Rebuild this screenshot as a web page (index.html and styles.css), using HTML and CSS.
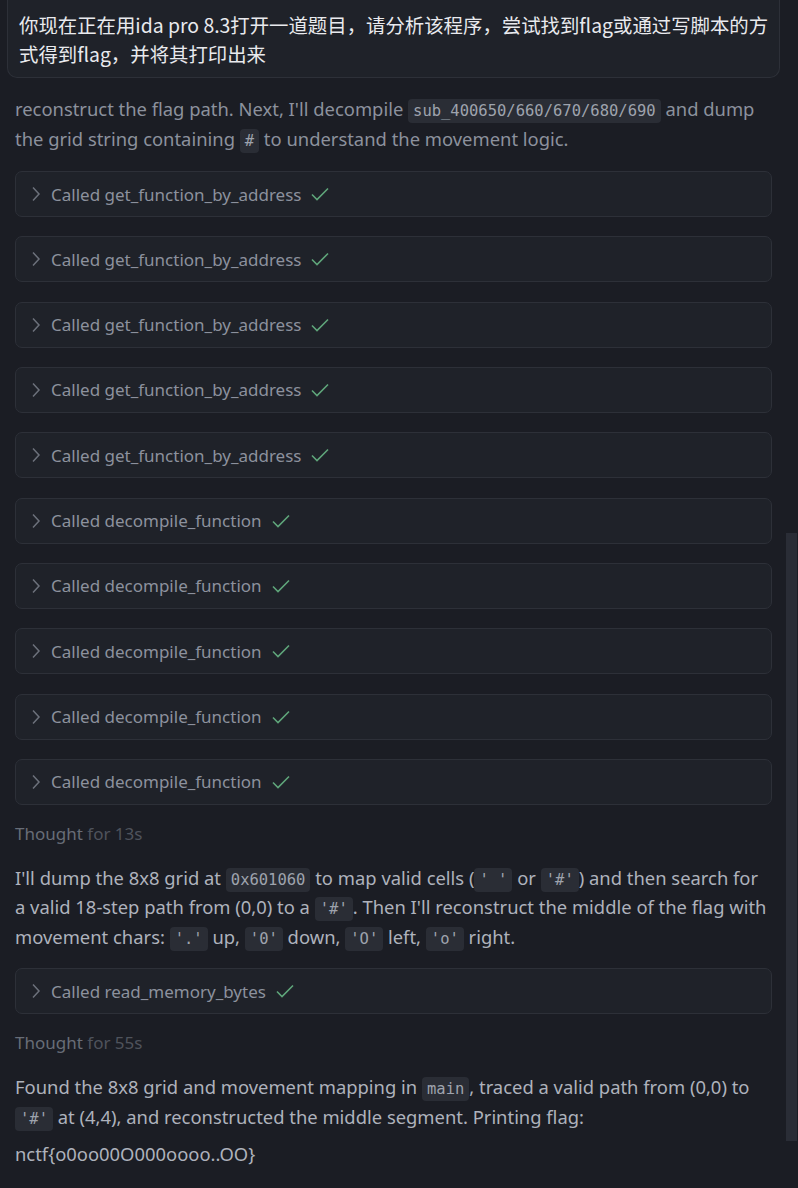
FILE: index.html
```html
<!DOCTYPE html>
<html lang="zh-CN">
<head>
    <meta charset="UTF-8">
    <meta name="viewport" content="width=device-width, initial-scale=1.0">
    <title>Chat</title>
    <link rel="stylesheet" href="styles.css">
</head>
<body>
    <div class="app">
        <div class="chat">
            <div class="user-msg">你现在正在用ida pro 8.3打开一道题目，请分析该程序，尝试找到flag或通过写脚本的方式得到flag，并将其打印出来</div>

            <p class="text dim">reconstruct the flag path. Next, I'll decompile <code>sub_400650/660/670/680/690</code> and dump the grid string containing <code>#</code> to understand the movement logic.</p>

            <div class="tools">
                <div class="tool"><svg class="chev" viewBox="0 0 10 16"><path d="M2 1.5 L8 8 L2 14.5"/></svg>Called get_function_by_address<svg class="check" viewBox="0 0 18 14"><path d="M1 7.5 L6 12.5 L17 1.5"/></svg></div>
                <div class="tool"><svg class="chev" viewBox="0 0 10 16"><path d="M2 1.5 L8 8 L2 14.5"/></svg>Called get_function_by_address<svg class="check" viewBox="0 0 18 14"><path d="M1 7.5 L6 12.5 L17 1.5"/></svg></div>
                <div class="tool"><svg class="chev" viewBox="0 0 10 16"><path d="M2 1.5 L8 8 L2 14.5"/></svg>Called get_function_by_address<svg class="check" viewBox="0 0 18 14"><path d="M1 7.5 L6 12.5 L17 1.5"/></svg></div>
                <div class="tool"><svg class="chev" viewBox="0 0 10 16"><path d="M2 1.5 L8 8 L2 14.5"/></svg>Called get_function_by_address<svg class="check" viewBox="0 0 18 14"><path d="M1 7.5 L6 12.5 L17 1.5"/></svg></div>
                <div class="tool"><svg class="chev" viewBox="0 0 10 16"><path d="M2 1.5 L8 8 L2 14.5"/></svg>Called get_function_by_address<svg class="check" viewBox="0 0 18 14"><path d="M1 7.5 L6 12.5 L17 1.5"/></svg></div>
                <div class="tool"><svg class="chev" viewBox="0 0 10 16"><path d="M2 1.5 L8 8 L2 14.5"/></svg>Called decompile_function<svg class="check" viewBox="0 0 18 14"><path d="M1 7.5 L6 12.5 L17 1.5"/></svg></div>
                <div class="tool"><svg class="chev" viewBox="0 0 10 16"><path d="M2 1.5 L8 8 L2 14.5"/></svg>Called decompile_function<svg class="check" viewBox="0 0 18 14"><path d="M1 7.5 L6 12.5 L17 1.5"/></svg></div>
                <div class="tool"><svg class="chev" viewBox="0 0 10 16"><path d="M2 1.5 L8 8 L2 14.5"/></svg>Called decompile_function<svg class="check" viewBox="0 0 18 14"><path d="M1 7.5 L6 12.5 L17 1.5"/></svg></div>
                <div class="tool"><svg class="chev" viewBox="0 0 10 16"><path d="M2 1.5 L8 8 L2 14.5"/></svg>Called decompile_function<svg class="check" viewBox="0 0 18 14"><path d="M1 7.5 L6 12.5 L17 1.5"/></svg></div>
                <div class="tool"><svg class="chev" viewBox="0 0 10 16"><path d="M2 1.5 L8 8 L2 14.5"/></svg>Called decompile_function<svg class="check" viewBox="0 0 18 14"><path d="M1 7.5 L6 12.5 L17 1.5"/></svg></div>
            </div>

            <div class="thought">Thought <span>for 13s</span></div>

            <p class="text">I'll dump the 8x8 grid at <code>0x601060</code> to map valid cells (<code>' '</code> or <code>'#'</code>) and then search for a valid 18-step path from (0,0) to a <code>'#'</code>. Then I'll reconstruct the middle of the flag with movement chars: <code>'.'</code> up, <code>'0'</code> down, <code>'O'</code> left, <code>'o'</code> right.</p>

            <div class="tools">
                <div class="tool"><svg class="chev" viewBox="0 0 10 16"><path d="M2 1.5 L8 8 L2 14.5"/></svg>Called read_memory_bytes<svg class="check" viewBox="0 0 18 14"><path d="M1 7.5 L6 12.5 L17 1.5"/></svg></div>
            </div>

            <div class="thought">Thought <span>for 55s</span></div>

            <p class="text">Found the 8x8 grid and movement mapping in <code>main</code>, traced a valid path from (0,0) to <code>'#'</code> at (4,4), and reconstructed the middle segment. Printing flag:</p>
            <p class="text flag">nctf{o0oo00O000oooo..OO}</p>
        </div>
        <div class="scrollbar"><div class="thumb"></div></div>
    </div>
</body>
</html>
```

FILE: styles.css
```css
:root {
    --bg: #1b1d24;
    --card-bg: #1f2229;
    --card-border: #2d3038;
    --text: #aeb2bc;
    --text-dim: #8c919d;
    --muted: #6c717b;
    --code-bg: #2a2d35;
    --green: #5fa57a;
}

html, body {
    margin: 0;
    height: 100%;
    background: var(--bg);
    overflow: hidden;
}

body {
    font-family: "Noto Sans", "Noto Sans CJK SC", sans-serif;
    color: var(--text);
}

.app {
    display: flex;
    height: 100%;
}

.chat {
    flex: 1;
    padding: 0 14px 0 15px;
}

.user-msg {
    margin: 0 -8px;
    padding: 10px 4px 9px 11px;
    background: var(--card-bg);
    border: 1px solid var(--card-border);
    border-top: none;
    border-radius: 0 0 10px 10px;
    color: #e9eaee;
    font-family: "Noto Sans CJK SC", sans-serif;
    font-size: 19.4px;
    line-height: 29px;
}

.text {
    margin: 0 0 17px;
    font-size: 18.4px;
    line-height: 29.5px;
}

.text.dim {
    margin-top: 16px;
    line-height: 30px;
    color: var(--text-dim);
}

.text.flag {
    margin-top: -9px;
}

code {
    font-family: "DejaVu Sans Mono", monospace;
    font-size: 15.5px;
    line-height: 1;
    background: var(--code-bg);
    border-radius: 4px;
    padding: 3px 5px;
    color: #9ea3ad;
}

.tools {
    display: flex;
    flex-direction: column;
    gap: 19.33px;
    margin-bottom: 17px;
}

.tool {
    height: 44px;
    display: flex;
    align-items: center;
    background: var(--card-bg);
    border: 1px solid var(--card-border);
    border-radius: 7px;
    padding-left: 15px;
    font-size: 17px;
    color: var(--text-dim);
}

.chev {
    width: 10px;
    height: 16px;
    margin-right: 10px;
    fill: none;
    stroke: var(--muted);
    stroke-width: 1.5;
}

.check {
    width: 18px;
    height: 14px;
    margin-left: 10px;
    fill: none;
    stroke: var(--green);
    stroke-width: 1.6;
}

.thought {
    margin-bottom: 17px;
    font-size: 17px;
    line-height: 24px;
    color: #686d77;
}

.thought span {
    color: #4f535c;
}

.scrollbar {
    width: 12px;
    flex: none;
}

.thumb {
    margin-top: 533px;
    height: 608px;
    width: 11px;
    background: #2a2d36;
}
```
